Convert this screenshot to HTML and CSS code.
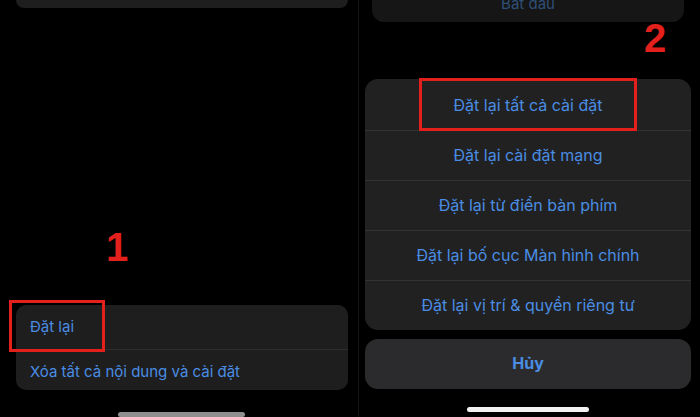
FILE: index.html
```html
<!DOCTYPE html>
<html lang="vi">
<head>
<meta charset="utf-8">
<link rel="stylesheet" href="styles.css">
</head>
<body>
<div class="screen">
  <section class="panel left">
    <div class="top-card"></div>
    <div class="group">
      <div class="row">Đặt lại</div>
      <div class="row">Xóa tất cả nội dung và cài đặt</div>
    </div>
    <div class="home home-left"></div>
    <div class="mark mark-1">1</div>
    <div class="box box-1"></div>
  </section>
  <section class="panel right">
    <div class="top-card-r"><span>Bắt đầu</span></div>
    <div class="sheet">
      <div class="opt first">Đặt lại tất cả cài đặt</div>
      <div class="opt">Đặt lại cài đặt mạng</div>
      <div class="opt">Đặt lại từ điển bàn phím</div>
      <div class="opt">Đặt lại bố cục Màn hình chính</div>
      <div class="opt">Đặt lại vị trí &amp; quyền riêng tư</div>
    </div>
    <div class="cancel">Hủy</div>
    <div class="home home-right"></div>
    <div class="mark mark-2">2</div>
    <div class="box box-2"></div>
  </section>
</div>
</body>
</html>
```
FILE: styles.css
```css
* { box-sizing: border-box; }
html, body { margin: 0; padding: 0; background: #000; }
body { font-family: "Inter", "Liberation Sans", sans-serif; }
.screen { display: flex; width: 700px; height: 417px; overflow: hidden; background: #000; }
.panel { position: relative; height: 417px; display: flex; flex-direction: column; }
.left { width: 359px; border-right: 1px solid #161616; }
.right { width: 341px; padding-left: 0; }

.top-card { margin: 0 0 0 16px; width: 332px; height: 8px; background: #1e1e1e; border-radius: 0 0 10px 10px; }
.group { margin: 297px 0 0 16px; width: 332px; background: #1e1e1e; border-radius: 10px; overflow: hidden; }
.row { height: 44px; display: flex; align-items: center; padding-left: 14px; color: #4a8de3; font-size: 15px; }
.row + .row { border-top: 1px solid #2e2e2e; }
.home { height: 5px; border-radius: 3px; background: #d8d8d8; }
.home-left { width: 127px; margin: 22px 0 0 118px; background: #8e8e8e; }

.top-card-r { margin-left: 13px; width: 312px; height: 22px; background: #161616; border-radius: 0 0 12px 12px; display: flex; justify-content: center; align-items: flex-end; padding-bottom: 9px; overflow: hidden; }
.top-card-r span { color: #2f4f78; font-size: 15px; line-height: 18px; }
.sheet { margin: 57px 0 0 6px; width: 326px; background: #212121; border-radius: 13px; overflow: hidden; }
.opt { height: 50px; display: flex; align-items: center; justify-content: center; color: #4a8de3; font-size: 16px; border-top: 1px solid #333; padding-bottom: 2px; }
.opt.first { height: 51px; border-top: 0; padding-bottom: 0; }
.cancel { margin: 9px 0 0 6px; width: 326px; height: 50px; background: #2b2b2d; border-radius: 13px; display: flex; align-items: center; justify-content: center; color: #4a8de3; font-size: 16px; font-weight: 700; padding-bottom: 2px; }
.home-right { width: 122px; margin: 18px 0 0 108px; background: #f2f2f2; }

.mark { position: absolute; color: #e4201c; font-family: "Liberation Sans", sans-serif; font-weight: 700; font-size: 40px; line-height: 1; }
.mark-1 { left: 106px; top: 227px; }
.mark-2 { left: 285px; top: 18px; }
.box { position: absolute; border: 3px solid #e4201c; }
.box-1 { left: 9px; top: 300px; width: 96px; height: 52px; }
.box-2 { left: 60px; top: 78px; width: 218px; height: 53px; }
```
